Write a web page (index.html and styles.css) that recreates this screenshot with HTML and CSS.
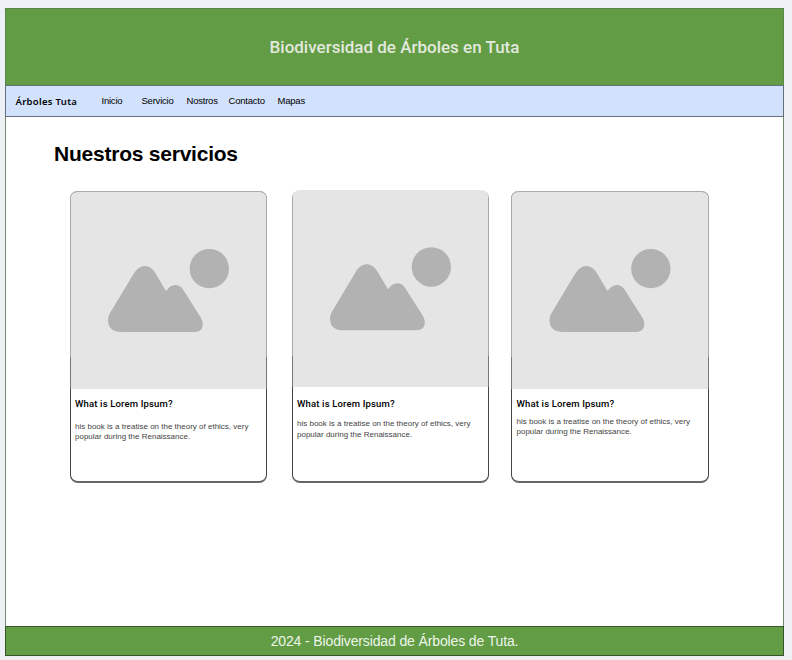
FILE: index.html
```html
<!DOCTYPE html>
<html lang="es">
<head>
<meta charset="utf-8">
<title>Biodiversidad de Árboles en Tuta</title>
<link rel="stylesheet" href="styles.css">
</head>
<body>
<svg class="symbols" aria-hidden="true">
  <symbol id="placeholder" viewBox="0 0 591 591">
    <path d="M118 370L191 248Q205 225 224 225Q243 225 256 246L288 300Q300 282 316 282Q329 282 338 294L391 377Q400 391 398 404Q395 423 371 423H156Q114 423 114 388Q114 379 118 370Z"/>
    <circle cx="418" cy="233" r="59"/>
  </symbol>
</svg>
<div class="page">
  <header class="banner"><h1>Biodiversidad de Árboles en Tuta</h1></header>
  <nav class="nav">
    <strong class="brand">Árboles Tuta</strong>
    <a class="home">Inicio</a>
    <a class="service">Servicio</a>
    <a class="us">Nostros</a>
    <a class="contact">Contacto</a>
    <a class="maps">Mapas</a>
  </nav>
  <main>
    <h2>Nuestros servicios</h2>
    <div class="cards">
      <article class="card first">
        <div class="picture"><svg><use href="#placeholder"/></svg></div>
        <h3>What is Lorem Ipsum?</h3>
        <p>his book is a treatise on the theory of ethics, very<br>popular during the Renaissance.</p>
      </article>
      <article class="card second">
        <div class="picture"><svg><use href="#placeholder"/></svg></div>
        <h3>What is Lorem Ipsum?</h3>
        <p>his book is a treatise on the theory of ethics, very<br>popular during the Renaissance.</p>
      </article>
      <article class="card third">
        <div class="picture"><svg><use href="#placeholder"/></svg></div>
        <h3>What is Lorem Ipsum?</h3>
        <p>his book is a treatise on the theory of ethics, very<br>popular during the Renaissance.</p>
      </article>
    </div>
  </main>
  <footer>2024 - Biodiversidad de Árboles de Tuta.</footer>
</div>
</body>
</html>
```
FILE: styles.css
```css
* { box-sizing: border-box; }
body {
  margin: 0;
  height: 660px;
  overflow: hidden;
  padding: 8px 8px 4px 5px;
  background: #edf1f6;
  font-family: "Liberation Sans", Arial, sans-serif;
  color: #000;
}
h1, h2, h3, p { margin: 0; white-space: nowrap; }
.symbols { display: none; }
.page {
  width: 779px;
  height: 648px;
  display: flex;
  flex-direction: column;
  background: #fff;
}
.banner {
  height: 77px;
  flex: none;
  padding-bottom: 1px;
  background: #629c44;
  border: 1px solid #5a8747;
  border-bottom: 0;
  display: flex;
  align-items: center;
  justify-content: center;
}
.banner h1 {
  font: 500 17px/20px Roboto, sans-serif;
  color: #e3e9df;
}
.nav {
  height: 32px;
  flex: none;
  display: flex;
  align-items: center;
  padding-left: 9.5px;
  background: #d3e2fc;
  border: 1px solid #666f7d;
  font-size: 9.5px;
  line-height: 12px;
  letter-spacing: -0.22px;
}
.nav > * { flex: none; white-space: nowrap; }
.brand {
  width: 86px;
  padding-top: 1px;
  font: 600 9.5px/12px "Noto Sans", sans-serif;
  letter-spacing: 0.3px;
}
.home { width: 40px; }
.service { width: 45px; }
.us { width: 42px; }
.contact { width: 49px; }
main {
  flex: 1;
  padding: 24px 0 0 48px;
  border: solid #72886a;
  border-width: 0 1px;
}
h2 { font-size: 21px; line-height: 26px; letter-spacing: -0.23px; }
.cards {
  display: flex;
  margin: 24px 0 0 16px;
}
.card {
  width: 197px;
  height: 292px;
  flex: none;
  border: solid #444;
  border-width: 0 1px 2px;
  border-bottom-color: #666;
  border-radius: 8px;
}
.second { margin-left: 25px; }
.third { margin-left: 22px; width: 198px; }
.picture {
  height: 198px;
  margin: 0 -1px;
  background: linear-gradient(#a8a8a8 165px, #777 165px) left / 1px 100% no-repeat,
    linear-gradient(#a8a8a8 165px, #777 165px) right / 1px 100% no-repeat, #e5e5e5;
  border-top: 1px solid #aaa;
  border-radius: 8px 8px 0 0;
}
.second .picture {
  height: 197px;
  margin-top: -1px;
  border-top-color: #e5e5e5;
}
.picture svg {
  display: block;
  width: 197px;
  height: 197px;
  margin-top: -1px;
  fill: #b2b2b2;
}
.second svg { transform: translateY(-0.7px); }
.third svg { transform: translateX(0.5px); }
.card h3 {
  margin: 9px 0 0 4px;
  font: 500 9.5px/12px Roboto, sans-serif;
  letter-spacing: 0.16px;
}
.second h3 { margin-top: 11px; }
.card p {
  margin: 12px 0 0 4px;
  font-size: 8px;
  line-height: 10px;
  color: #444;
}
.second p { margin-top: 8px; line-height: 11px; }
.third p { margin-top: 7px; }
.third h3, .third p { margin-left: 4.5px; }
footer {
  height: 30px;
  flex: none;
  background: #629c44;
  border: 1px solid #365629;
  color: #eef5eb;
  font-size: 14px;
  line-height: 29px;
  letter-spacing: -0.13px;
  text-align: center;
}
```
